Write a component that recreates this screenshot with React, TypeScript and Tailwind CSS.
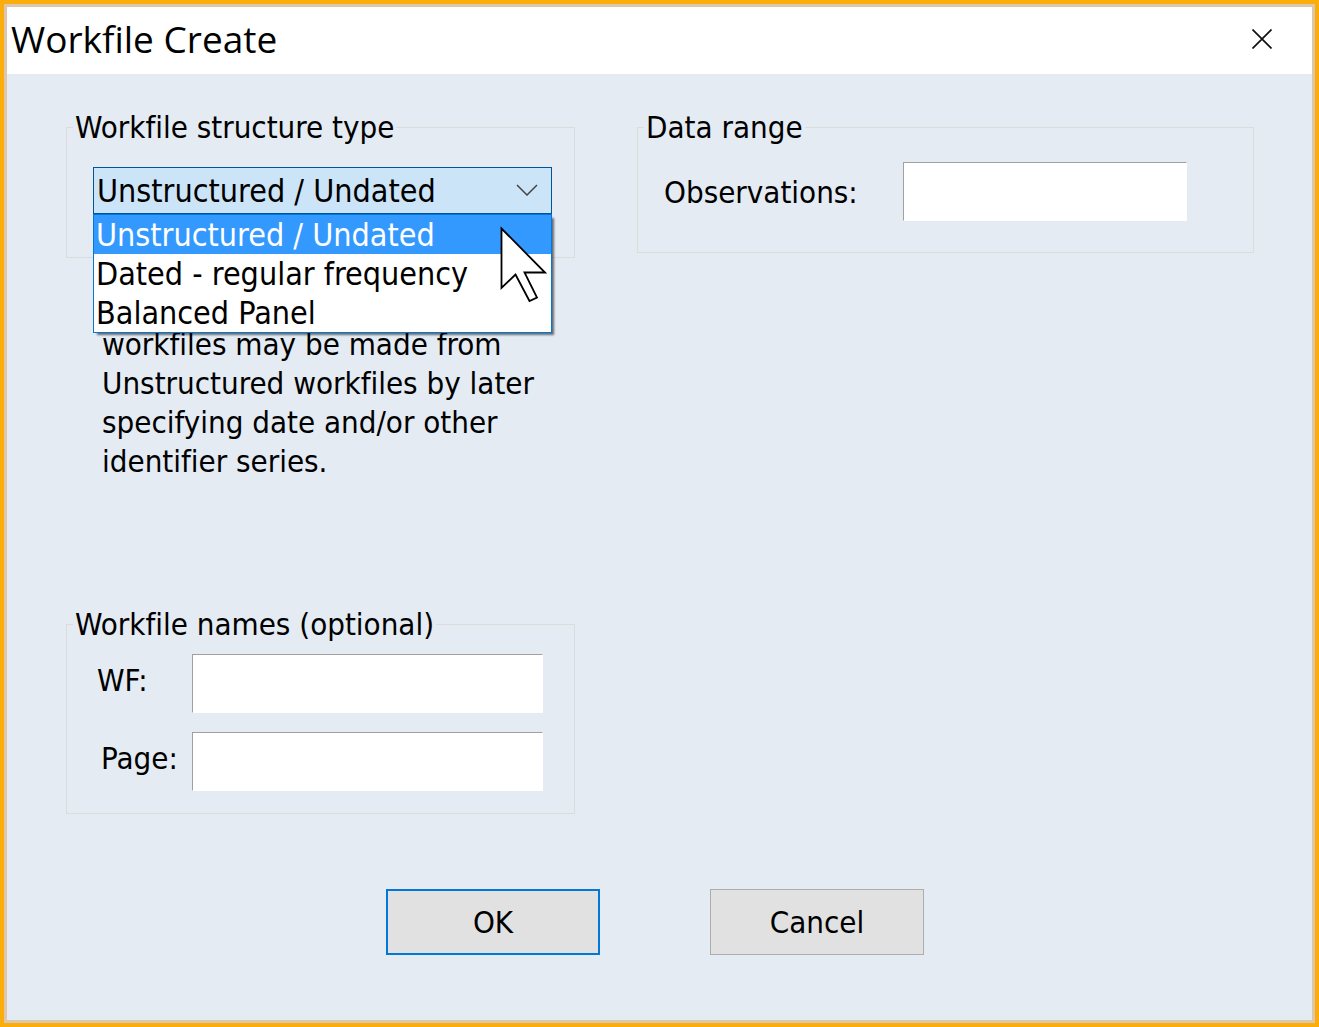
import { useState, type ReactNode } from "react";

const OPTIONS = [
  "Unstructured / Undated",
  "Dated - regular frequency",
  "Balanced Panel",
];

function Group({ title, className, children }: { title: string; className: string; children: ReactNode }) {
  return (
    <fieldset className="min-w-0 border border-[#dcdcdc]">
      <legend className="ml-1.5 px-0.5 leading-[41px]">{title}</legend>
      <div className={className}>{children}</div>
    </fieldset>
  );
}

function TextBox({ id }: { id: string }) {
  return (
    <input
      id={id}
      type="text"
      className="h-[59px] min-w-0 flex-1 border border-t-[#a0a0a0] border-r-white border-b-white border-l-[#a0a0a0] bg-white px-1 outline-none"
    />
  );
}

function Pointer() {
  return (
    <svg
      className="pointer-events-none absolute top-[59px] right-[5px] h-[77px] w-[47px]"
      viewBox="0 0 47 77"
      fill="white"
      stroke="black"
      strokeWidth="1.800"
      aria-hidden="true"
    >
      <path d="M1.500 2.500V62L15.500 48.500L29.500 75L37 71.500L24.500 46.500H45Z" />
    </svg>
  );
}

export default function App() {
  const [selected, setSelected] = useState(OPTIONS[0]);

  return (
    <div className="min-h-screen border-4 border-[#faad0b] bg-[#e4ebf3]">
      <main className="flex min-h-[1019px] flex-col border-[3px] border-[#dcc6ac] font-['DejaVu_Sans_Condensed','DejaVu_Sans',sans-serif] text-[31px] leading-[39px] text-black [font-variant-ligatures:none]">
        <header className="flex h-[67px] items-center justify-between bg-white pr-10 pb-1 pl-1">
          <h1 className="font-['Open_Sans',sans-serif] text-[37px] leading-[48px]">Workfile Create</h1>
          <button type="button" aria-label="Close" className="flex h-5 w-5 items-center justify-center">
            <svg className="h-5 w-5" viewBox="0 0 20 20" fill="none" stroke="#111" strokeWidth="1.700" aria-hidden="true">
              <path d="M0.500 0.500L19.500 19.500M19.500 0.500L0.500 19.500" />
            </svg>
          </button>
        </header>

        <form className="pt-[33px] pr-[58px] pl-[59px]" onSubmit={(e) => e.preventDefault()}>
          <div className="grid grid-cols-[509fr_617fr] items-start gap-[62px]">
            <div className="min-w-0">
              <Group title="Workfile structure type" className="pt-[19px] pr-[22px] pb-[43px] pl-[26px]">
                <div className="relative text-[32px]">
                  <select
                    aria-label="Workfile structure type"
                    value={selected}
                    onChange={(e) => setSelected(e.target.value)}
                    className="block h-[47px] w-full appearance-none border border-[#005499] bg-[#cce4f7] pt-0.5 pl-[3px] outline-none"
                  >
                    {OPTIONS.map((o) => (
                      <option key={o}>{o}</option>
                    ))}
                  </select>
                  <svg
                    className="pointer-events-none absolute top-[17px] right-3.5 h-3 w-[22px]"
                    viewBox="0 0 22 12"
                    fill="none"
                    stroke="#444"
                    strokeWidth="1.500"
                    aria-hidden="true"
                  >
                    <path d="M1 1L11 11L21 1" />
                  </svg>
                  <ul
                    role="listbox"
                    aria-label="Structure types"
                    className="absolute top-[47px] right-0 left-0 border border-[#0078d7] bg-white shadow-[3px_3px_2px_-1px_rgba(0,0,0,0.55)]"
                  >
                    {OPTIONS.map((o) => (
                      <li
                        key={o}
                        role="option"
                        aria-selected={o === selected}
                        onClick={() => setSelected(o)}
                        className="pt-0.5 pl-0.5 leading-[37px] whitespace-nowrap aria-selected:bg-[#3399ff] aria-selected:text-white"
                      >
                        {o}
                      </li>
                    ))}
                  </ul>
                  <Pointer />
                </div>
              </Group>
              <p className="mt-[67px] mr-6 mb-[123px] ml-9">
                workfiles may be made from Unstructured workfiles by later specifying date and/or other identifier
                series.
              </p>
              <Group title="Workfile names (optional)" className="pt-[9px] pr-[31px] pb-[22px] pl-[30px]">
                <div className="flex flex-col gap-[19px]">
                  <div className="flex items-center">
                    <label htmlFor="wf" className="w-[95px] pb-1.5">
                      WF:
                    </label>
                    <TextBox id="wf" />
                  </div>
                  <div className="flex items-center">
                    <label htmlFor="page" className="w-[95px] pb-1.5 pl-1">
                      Page:
                    </label>
                    <TextBox id="page" />
                  </div>
                </div>
              </Group>
            </div>

            <Group title="Data range" className="pt-3.5 pr-[66px] pb-[31px] pl-[26px]">
              <div className="flex items-center">
                <label htmlFor="observations" className="w-[239px] pt-0.5">
                  Observations:
                </label>
                <TextBox id="observations" />
              </div>
            </Group>
          </div>

          <div className="mt-[75px] flex justify-center gap-[110px] pr-2.5">
            <button type="submit" className="h-[66px] w-[214px] border-2 border-[#0078d7] bg-[#e1e1e1]">
              OK
            </button>
            <button type="button" className="h-[66px] w-[214px] border border-[#adadad] bg-[#e1e1e1]">
              Cancel
            </button>
          </div>
        </form>
      </main>
    </div>
  );
}
